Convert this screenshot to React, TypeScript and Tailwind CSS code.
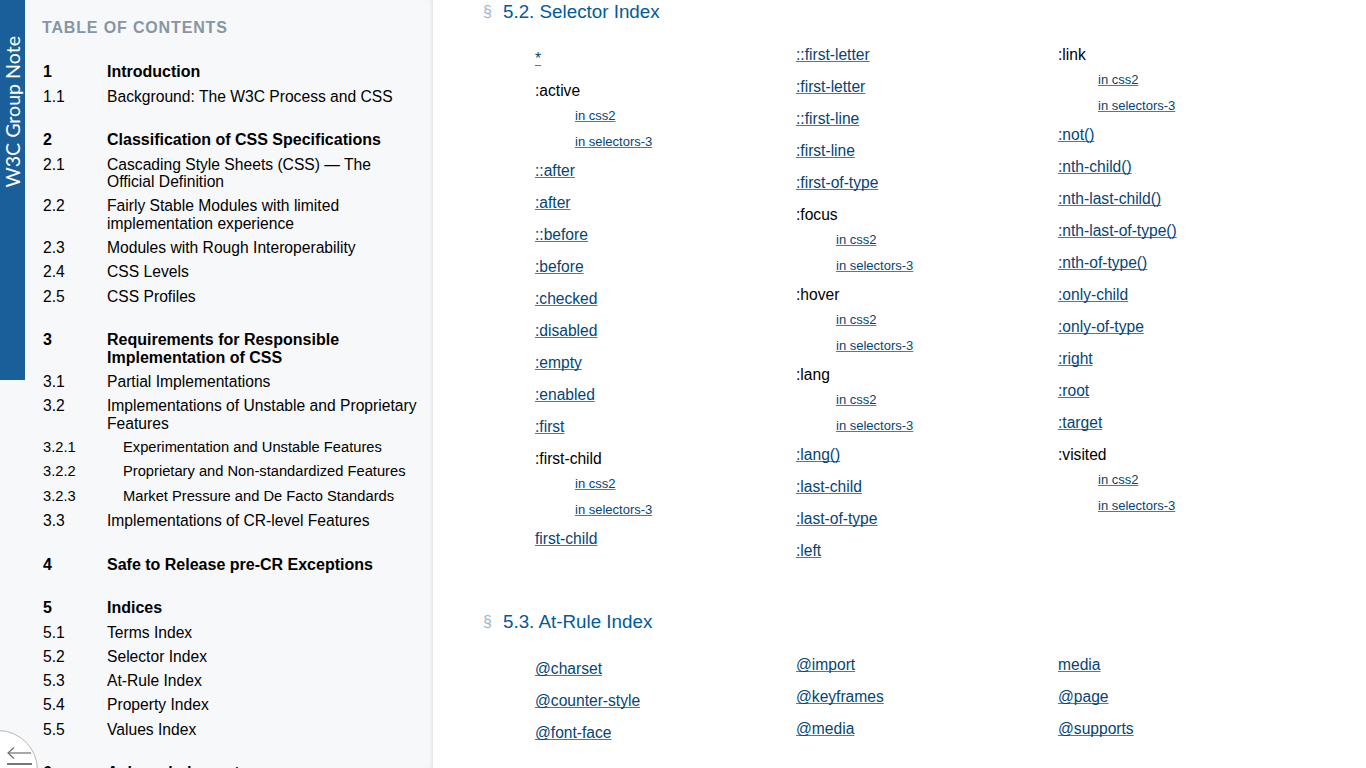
import React from "react";

type TocItem = { n: string; t: string; bold?: boolean; sub?: boolean };

const toc: TocItem[][] = [
  [
    { n: "1", t: "Introduction", bold: true },
    { n: "1.1", t: "Background: The W3C Process and CSS" },
  ],
  [
    { n: "2", t: "Classification of CSS Specifications", bold: true },
    { n: "2.1", t: "Cascading Style Sheets (CSS) — The Official Definition" },
    { n: "2.2", t: "Fairly Stable Modules with limited implementation experience" },
    { n: "2.3", t: "Modules with Rough Interoperability" },
    { n: "2.4", t: "CSS Levels" },
    { n: "2.5", t: "CSS Profiles" },
  ],
  [
    { n: "3", t: "Requirements for Responsible Implementation of CSS", bold: true },
    { n: "3.1", t: "Partial Implementations" },
    { n: "3.2", t: "Implementations of Unstable and Proprietary Features" },
    { n: "3.2.1", t: "Experimentation and Unstable Features", sub: true },
    { n: "3.2.2", t: "Proprietary and Non-standardized Features", sub: true },
    { n: "3.2.3", t: "Market Pressure and De Facto Standards", sub: true },
    { n: "3.3", t: "Implementations of CR-level Features" },
  ],
  [{ n: "4", t: "Safe to Release pre-CR Exceptions", bold: true }],
  [
    { n: "5", t: "Indices", bold: true },
    { n: "5.1", t: "Terms Index" },
    { n: "5.2", t: "Selector Index" },
    { n: "5.3", t: "At-Rule Index" },
    { n: "5.4", t: "Property Index" },
    { n: "5.5", t: "Values Index" },
  ],
  [{ n: "6", t: "Acknowledgments", bold: true }],
];

type Entry = { label: string; link?: boolean; subs?: string[] };

const sel: Entry[][] = [
  [
    { label: "*", link: true },
    { label: ":active", subs: ["in css2", "in selectors-3"] },
    { label: "::after", link: true },
    { label: ":after", link: true },
    { label: "::before", link: true },
    { label: ":before", link: true },
    { label: ":checked", link: true },
    { label: ":disabled", link: true },
    { label: ":empty", link: true },
    { label: ":enabled", link: true },
    { label: ":first", link: true },
    { label: ":first-child", subs: ["in css2", "in selectors-3"] },
    { label: "first-child", link: true },
  ],
  [
    { label: "::first-letter", link: true },
    { label: ":first-letter", link: true },
    { label: "::first-line", link: true },
    { label: ":first-line", link: true },
    { label: ":first-of-type", link: true },
    { label: ":focus", subs: ["in css2", "in selectors-3"] },
    { label: ":hover", subs: ["in css2", "in selectors-3"] },
    { label: ":lang", subs: ["in css2", "in selectors-3"] },
    { label: ":lang()", link: true },
    { label: ":last-child", link: true },
    { label: ":last-of-type", link: true },
    { label: ":left", link: true },
  ],
  [
    { label: ":link", subs: ["in css2", "in selectors-3"] },
    { label: ":not()", link: true },
    { label: ":nth-child()", link: true },
    { label: ":nth-last-child()", link: true },
    { label: ":nth-last-of-type()", link: true },
    { label: ":nth-of-type()", link: true },
    { label: ":only-child", link: true },
    { label: ":only-of-type", link: true },
    { label: ":right", link: true },
    { label: ":root", link: true },
    { label: ":target", link: true },
    { label: ":visited", subs: ["in css2", "in selectors-3"] },
  ],
];

const atRules: Entry[][] = [
  [
    { label: "@charset", link: true },
    { label: "@counter-style", link: true },
    { label: "@font-face", link: true },
  ],
  [
    { label: "@import", link: true },
    { label: "@keyframes", link: true },
    { label: "@media", link: true },
  ],
  [
    { label: "media", link: true },
    { label: "@page", link: true },
    { label: "@supports", link: true },
  ],
];

const linkCls =
  "text-[#034575] underline decoration-[#707070] [text-decoration-skip-ink:none]";

function Column({ items, first }: { items: Entry[]; first?: boolean }) {
  return (
    <div className={first ? "pt-[4px]" : ""}>
      {items.map((it, i) => (
        <div key={i}>
          <div className="h-[32px] leading-[32px] text-[15.6px] whitespace-nowrap">
            {it.link ? (
              <a className={linkCls}>{it.label}</a>
            ) : (
              <span className="text-black">{it.label}</span>
            )}
          </div>
          {it.subs && (
            <div className="mt-[-4px] pl-[40px]">
              {it.subs.map((s, j) => (
                <div key={j} className="h-[26px] leading-[26px] text-[13px] whitespace-nowrap">
                  <a className={linkCls}>{s}</a>
                </div>
              ))}
            </div>
          )}
        </div>
      ))}
    </div>
  );
}

function Heading({ children }: { children: React.ReactNode }) {
  return (
    <div className="flex h-[24px] items-center leading-[24px]">
      <span className="w-[20px] text-[16px] text-[#9fb3c8]">§</span>
      <span className="text-[18.8px] text-[#005a9c]">{children}</span>
    </div>
  );
}

export default function App() {
  return (
    <div
      className="relative flex h-[768px] w-[1366px] overflow-hidden bg-white text-black"
      style={{ fontFamily: '"Liberation Sans", Arial, sans-serif' }}
    >
      {/* Sidebar */}
      <aside className="h-full w-[433px] shrink-0 overflow-hidden bg-[#f7f8f9] pl-[42px] shadow-[inset_-3px_0_3px_-1px_rgba(0,0,0,0.07)]">
        <div className="pt-[16px] text-[16px] font-bold uppercase leading-[24px] tracking-[0.85px] text-[#8796a3]">
          Table of Contents
        </div>
        <div className="mt-[-3px] flex flex-col">
          {toc.map((sec, si) => (
            <div key={si} className="pt-[19.5px]">
              {sec.map((it, ii) => {
                const size = it.bold
                  ? "text-[16px] font-bold"
                  : it.sub
                    ? "text-[14.7px]"
                    : "text-[15.65px]";
                return (
                  <div key={ii} className="flex pl-[1px] pt-[6.75px] leading-[17.5px]">
                    <div className={`w-[64px] shrink-0 ${size}`}>{it.n}</div>
                    <div className={`w-[312px] ${it.sub ? "pl-[16px]" : ""} ${size}`}>{it.t}</div>
                  </div>
                );
              })}
            </div>
          ))}
        </div>
      </aside>

      {/* Main */}
      <main className="flex-1 pl-[50px]">
        <Heading>5.2. Selector Index</Heading>
        <div className="mt-[15px] grid grid-cols-[261px_262px_1fr] pl-[52px]">
          {sel.map((c, i) => (
            <Column key={i} items={c} first={i === 0} />
          ))}
        </div>
        <div className="mt-[43px]">
          <Heading>5.3. At-Rule Index</Heading>
        </div>
        <div className="mt-[15px] grid grid-cols-[261px_262px_1fr] pl-[52px]">
          {atRules.map((c, i) => (
            <Column key={i} items={c} first={i === 0} />
          ))}
        </div>
      </main>

      {/* W3C Group Note banner */}
      <div className="absolute left-0 top-0 flex h-[380px] w-[25px] justify-center bg-[#1a5e9a]">
        <span
          className="mt-[36px] h-fit rotate-180 text-[19.6px] leading-[25px] text-white [writing-mode:vertical-rl]"
          style={{ fontFamily: "Lato, 'Open Sans', sans-serif" }}
        >
          W3C Group Note
        </span>
      </div>

      {/* Collapse sidebar button */}
      <div className="absolute left-[-42px] top-[730px] h-[80px] w-[80px] rounded-full border border-[#b9b9b9] bg-white">
        <svg
          className="absolute left-[48px] top-[14px]"
          width="26"
          height="22"
          viewBox="0 0 26 22"
          fill="none"
        >
          <path d="M1 8 H24" stroke="#6f6f6f" strokeWidth="1.2" />
          <path d="M7 2.5 L1 8 L7 13.5" stroke="#6f6f6f" strokeWidth="1.2" />
          <path d="M0 19 H25" stroke="#7a7a7a" strokeWidth="2" />
        </svg>
      </div>
    </div>
  );
}
